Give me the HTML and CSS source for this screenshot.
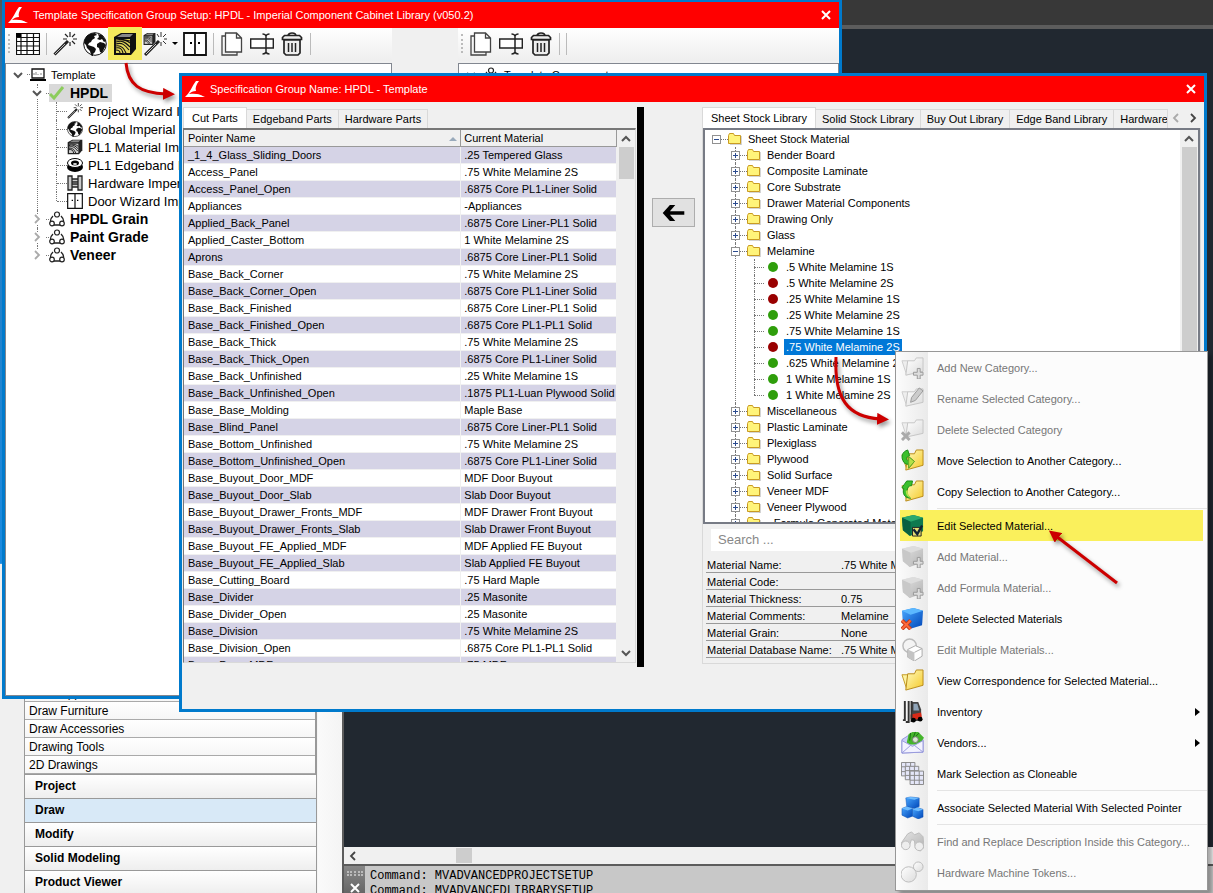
FILE: index.html
```html
<!DOCTYPE html>
<html lang="en">
<head>
  <meta charset="UTF-8" />
  <meta name="viewport" content="width=device-width, initial-scale=1.0"/>
  <title>Template Specification Group Setup</title>
  <link rel="stylesheet" href="styles.css">
</head>
<body>
  <svg class="defs" aria-hidden="true">
    <defs>
      <linearGradient id="gold" x1="0" y1="0" x2="1" y2="1"><stop offset="0" stop-color="#fffbc0"/><stop offset="1" stop-color="#f5c928"/></linearGradient>
      <linearGradient id="blue" x1="0" y1="0" x2="1" y2="1"><stop offset="0" stop-color="#4aa8ff"/><stop offset="1" stop-color="#0046b8"/></linearGradient>
      <linearGradient id="grey" x1="0" y1="0" x2="1" y2="1"><stop offset="0" stop-color="#e4e4e4"/><stop offset="1" stop-color="#b2b2b2"/></linearGradient>
      <linearGradient id="pale" x1="0" y1="0" x2="1" y2="1"><stop offset="0" stop-color="#fff"/><stop offset="1" stop-color="#dcdcdc"/></linearGradient>
      <marker id="head" markerWidth="4" markerHeight="4" refX="1" refY="2" orient="auto"><path d="M0 0L4 2L0 4z" fill="#c00"/></marker>
    </defs>
    <symbol id="logo" viewBox="0 0 20 16"><path d="M14 0c-3 4-4 7-3 10-3 0-5 1-7 3 6-1 11 0 16 3H0C5 12 7 5 11 0z" fill="#fff"/><path d="M3 14c5-2 11-1 15 1.500H1z" fill="#fff"/></symbol>
    <symbol id="close" viewBox="0 0 10 10"><path d="M1 1l8 8M9 1L1 9" fill="none" stroke="#fff" stroke-width="2"/></symbol>
    <symbol id="grid" viewBox="0 0 24 24"><path d="M.5 1.500h23v21H.5zM.5 5.500h23M.5 9.500h23M.5 14h23M.5 18.500h23M5 1.500v21M11 1.500v21M17.500 1.500v21" fill="#fff" stroke="#111" stroke-width="1.200"/><path d="M0 1h5v4H0z"/></symbol>
    <symbol id="wand" viewBox="0 0 24 24"><path d="M1.500 22.500L15 9" stroke="#222" stroke-width="3"/><path d="M2 22L12 12" stroke="#bbb" stroke-width="1"/><path d="M17 0v5M17 10v4M10 7h4M20 7h4M12 2l3 3M22 2l-3 3M19 9l3 3" stroke="#222" stroke-width="1.200"/></symbol>
    <symbol id="globe" viewBox="0 0 24 24"><circle cx="12" cy="12" r="11.300" fill="#fff" stroke="#111"/><path d="M3 5c2-3 6-4 9-4l2 2-3 1 1 2-3 2-1 2-2 1-1 2 3 1 3 1 2 2-1 3-2 2v3l-2-2-1-4-3-3-1-3-2-2c0-2 1-4 2-6zM15 2l4 1 4 6-2 1-2-3-2 1-3-1 2-2zM14 12l3-2 4 1 2 2-2 4-2 4-2-1-1-4-2-1z" fill="#111"/></symbol>
    <symbol id="cabinet" viewBox="0 0 24 24"><path d="M1 5L8 1h15v16l-5 6H1z" fill="#111"/><path d="M4 5l5-3h11l-3 3z" fill="#888"/><path d="M3 7h14v14H3z" fill="#e3d85c"/><path d="M3 10c6-2 9 0 14 5M3 12c6-2 9 1 13 6M3 14c5-1 8 2 10 7M3 16c4-1 6 1 7 5M3 18c2 0 4 1 4 3M3 8c6-1 10 0 14 3M8 7l9 2" fill="none" stroke="#111" stroke-width="1.100"/></symbol>
    <symbol id="cabinet-grey" viewBox="0 0 24 24"><path d="M1 5L8 1h15v16l-5 6H1z" fill="#222"/><path d="M4 5l5-3h11l-3 3z" fill="#888"/><path d="M3 7h14v14H3z" fill="#ccc"/><path d="M3 10c6-2 9 0 14 5M3 12c6-2 9 1 13 6M3 14c5-1 8 2 10 7M3 16c4-1 6 1 7 5M3 8c6-1 10 0 14 3" fill="none" stroke="#222" stroke-width="1.500"/></symbol>
    <symbol id="cabinet-wand" viewBox="0 0 24 24"><use href="#cabinet-grey" width="13" height="14"/><path d="M2 23L16 9" stroke="#222" stroke-width="3"/><path d="M3 22L13 12" stroke="#ccc"/><path d="M18 0v5M18 10v4M21 7h3M14 2l2 3M23 2l-3 3M20 9l3 3" stroke="#333"/></symbol>
    <symbol id="doors" viewBox="0 0 24 24"><path d="M1 1h22v22H1zM12 1v22" fill="#fff" stroke="#111" stroke-width="1.800"/><path d="M7 10h2v2H7zM15 10h2v2h-2z"/></symbol>
    <symbol id="copy" viewBox="0 0 22 24"><path d="M4 4H1v19h15v-3" fill="none" stroke="#444" stroke-width="1.300"/><path d="M4.500 1h11l5 5v14h-16zM15.500 1v5h5" fill="#fff" stroke="#444" stroke-width="1.300"/></symbol>
    <symbol id="rename" viewBox="0 0 24 24"><path d="M.7 7h22.600v9H.7z" fill="#fff" stroke="#222" stroke-width="1.400"/><path d="M16 4v16M12.500 2c2 0 3 .5 3.500 2 .5-1.500 1.500-2 3.500-2M12.500 22c2 0 3-.5 3.500-2 .5 1.500 1.500 2 3.500 2" fill="none" stroke="#222" stroke-width="1.500"/></symbol>
    <symbol id="trash" viewBox="0 0 22 24"><path d="M7 4c0-4 8-4 8 0M1.500 5.500l2-2h15l2 2v2h-19zM3 8h16v13l-2 2H5l-2-2z" fill="#eee" stroke="#222" stroke-width="1.700"/><path d="M7.500 11v9M11 11v9M14.500 11v9" stroke="#222" stroke-width="1.500"/></symbol>
    <symbol id="down" viewBox="0 0 10 10"><path d="M1 3l4 4 4-4" fill="none" stroke="#555" stroke-width="2"/></symbol>
    <symbol id="up" viewBox="0 0 10 10"><path d="M1 7l4-4 4 4" fill="none" stroke="#555" stroke-width="2"/></symbol>
    <symbol id="right" viewBox="0 0 10 10"><path d="M3 1l4 4-4 4" fill="none" stroke="currentColor" stroke-width="1.800"/></symbol>
    <symbol id="left" viewBox="0 0 10 10"><path d="M7 1L3 5l4 4" fill="none" stroke="currentColor" stroke-width="1.800"/></symbol>
    <symbol id="computer" viewBox="0 0 16 14"><path d="M2 1h12v9H2z" fill="#fff" stroke="#111" stroke-width="1.300"/><path d="M4 7V5M6 7V4M8 7V6M11 7V5" stroke="#888"/><path d="M0 11h16v2H0z"/></symbol>
    <symbol id="tick" viewBox="0 0 16 16"><path d="M1 9l4 4L14 2" fill="none" stroke="#8ccc5c" stroke-width="3"/></symbol>
    <symbol id="roll" viewBox="0 0 16 16"><ellipse cx="8" cy="10" rx="8" ry="5"/><ellipse cx="8" cy="6" rx="7.500" ry="4.500" fill="#fff" stroke="#000"/><ellipse cx="8" cy="6" rx="4" ry="2.500"/><ellipse cx="8" cy="7" rx="2" ry="1" fill="#ddd"/></symbol>
    <symbol id="hinge" viewBox="0 0 16 16"><path d="M1 1h4v14H1zM11 1h4v14h-4zM5 4h6v3H5zM5 9h6v3H5z" fill="#ccc" stroke="#222" stroke-width="1.300"/></symbol>
    <symbol id="group" viewBox="0 0 16 16"><path d="M4 5C1 8 1 11 3 13M12 5c3 3 3 6 1 8M5 14h6" fill="none" stroke="#222" stroke-width="1.300"/><g fill="#fff" stroke="#222" stroke-width="1.200"><circle cx="8" cy="3.500" r="2.500"/><circle cx="3" cy="12.500" r="2.300"/><circle cx="13" cy="12.500" r="2.300"/></g></symbol>
    <symbol id="folder" viewBox="0 0 14 12"><path d="M13 3v9H2" fill="none" stroke="#aaa"/><path d="M.5 10.500V2.500l1-2h4l1 2h6v8z" fill="#fff47a" stroke="#c99b22"/></symbol>
    <symbol id="m-folder" viewBox="0 0 24 24"><path d="M1 6h6l-1 15z" fill="#fdf3a0" stroke="#c39a22"/><path d="M5 22L7 5h7l2-4h7v16z" fill="url(#gold)" stroke="#b98a18"/></symbol>
    <symbol id="m-folder-off" viewBox="0 0 24 24"><path d="M1 5h6l-1 15z" fill="#eee" stroke="#ccc"/><path d="M5 20L7 5h7l2-3h7v14z" fill="url(#pale)" stroke="#c4c4c4"/></symbol>
    <symbol id="m-add-cat" viewBox="0 0 24 24"><use href="#m-folder-off"/><path d="M17 13h3v4h3v3h-3v4h-3v-4h-4v-3h4z" fill="#ddd" stroke="#999"/></symbol>
    <symbol id="m-rename-cat" viewBox="0 0 24 24"><use href="#m-folder-off"/><path d="M10 16l1-5 8-10 4 3-8 10z" fill="#ccc" stroke="#999"/></symbol>
    <symbol id="m-del-cat" viewBox="0 0 24 24"><use href="#m-folder-off"/><path d="M1 15l8 8M9 15l-8 8" stroke="#aaa" stroke-width="3"/></symbol>
    <symbol id="m-move" viewBox="0 0 24 24"><use href="#m-folder"/><path d="M7 1C1 3 0 8 2 12c1 3 3 4 6 4v4l6-7-6-5v4C5 12 5 8 9 7z" fill="#3cc02d" stroke="#198a19"/><path d="M8 8l6 5-6 7z" fill="#b5e04a" stroke="#6aa82a"/></symbol>
    <symbol id="m-copy" viewBox="0 0 24 24"><use href="#m-folder"/><path d="M1 8l5-7h6l-1 5h-2c-4 4-4 9 1 13C4 19 1 14 3 9z" fill="#3cc02d" stroke="#198a19"/><path d="M7 11c0 4 1 6 4 8-5-1-6-4-6-8z" fill="#b5e04a"/></symbol>
    <symbol id="m-edit" viewBox="0 0 24 24"><path d="M1 4l12-3 10 3v14l-14 5-7-6z" fill="#0f7a4f"/><path d="M1 4l12-3 10 3-13 4z" fill="#2aa86e"/><path d="M1 4l9 4v15l-8-6z" fill="#086040"/><path d="M12 14h9v9h-9z" fill="#e4dc72" stroke="#222"/><path d="M13 16l4 5 5-9" fill="none" stroke="#123" stroke-width="2.500"/></symbol>
    <symbol id="m-cube-off" viewBox="0 0 24 24"><path d="M1 4l12-3 10 3v14l-14 5-7-6z" fill="url(#grey)"/><path d="M1 4l12-3 10 3-13 4z" fill="#ddd"/><path d="M1 4l9 4v15l-8-6z" fill="#c8c8c8"/><path d="M17 13h3v4h3v3h-3v4h-3v-4h-4v-3h4z" fill="#ddd" stroke="#999"/></symbol>
    <symbol id="m-delete" viewBox="0 0 24 24"><path d="M1 4l12-3 10 3-1 15-13 4-7-6z" fill="url(#blue)"/><path d="M1 4l12-3 10 3-13 4z" fill="#5cb8ff"/><path d="M1 14l9 9M10 14l-9 9" stroke="#c33a1a" stroke-width="4"/><path d="M1 14l9 9M10 14l-9 9" stroke="#ff6a3c" stroke-width="2"/></symbol>
    <symbol id="m-multi" viewBox="0 0 24 24"><circle cx="9" cy="8" r="7" fill="#f4f4f4" stroke="#bbb" stroke-width="1.500"/><path d="M7 12l8-4 7 3v8l-8 5-7-4z" fill="#fff" stroke="#aaa"/><path d="M7 12l7 3v9l-7-4z" fill="#c4c4c4"/><path d="M14 15l8-4" stroke="#aaa"/></symbol>
    <symbol id="m-forklift" viewBox="0 0 24 24"><path d="M11 2h7l3 8v12h-9z" fill="#444"/><path d="M13 4h4l2 7h-6z" fill="#8fa4b8"/><path d="M10 15l11-2 1 7H10z" fill="#d82a18"/><path d="M4 1v20H2M8 1v22H5M11 1v22" fill="none" stroke="#333" stroke-width="2"/><circle cx="13" cy="21" r="2.500"/><circle cx="20" cy="20" r="2.500"/></symbol>
    <symbol id="m-vendor" viewBox="0 0 24 24"><path d="M1 9l11-7 11 7v13L1 23z" fill="#c9cdf8" stroke="#8d90d8"/><path d="M6 12L8 3l4-2h6l6 6-5 7H9z" fill="#45b52c"/><path d="M9 10l1-8M12 9l3-8M15 6l4-4" stroke="#176d12"/><circle cx="15" cy="9" r="3" fill="#d9e8d2" stroke="#777"/><path d="M1 10l11 6 11-6v12L1 23zM1 23l9-8M23 22l-9-7" fill="#f2f2ff" stroke="#9699db"/></symbol>
    <symbol id="m-clone" viewBox="0 0 24 24"><g fill="#e4e6f8" stroke="#888"><path d="M.5.500h14v14H.5zM.5 5h14M.5 10h14M5 .5v14M10 .5v14"/><path d="M4.500 4.500h14v14h-14zM4.500 9h14M4.500 14h14M9 4.500v14M14 4.500v14"/><path d="M9.500 9.500h14v14h-14zM9.500 14h14M9.500 19h14M14 9.500v14M19 9.500v14"/></g></symbol>
    <symbol id="m-associate" viewBox="0 0 24 24"><g fill="url(#blue)" stroke="#0a4fb0" stroke-width=".5"><path d="M5 2l5-1 9 1v9l-5 2-8-2z"/><path d="M1 13l5-2 6 2v8l-5 2-6-3z"/><path d="M12 14l5-2 6 2v8l-5 2-6-3z"/></g><path d="M5 2l5-1 9 1-5 2zM1 13l5-2 6 2-5 2zM12 14l5-2 6 2-5 2z" fill="#6dbcff"/></symbol>
    <symbol id="m-find" viewBox="0 0 24 24"><path d="M7 4l4-2 3 3 5-2 4 4 1 11-4 4-5-3-1-8-3-1-3 8-5 1-3-5z" fill="url(#grey)" stroke="#bbb"/><circle cx="5" cy="16" r="4.500" fill="#eee" stroke="#bbb"/><circle cx="19" cy="17" r="4.500" fill="#eee" stroke="#bbb"/></symbol>
    <symbol id="m-token" viewBox="0 0 24 24"><g fill="url(#pale)" stroke="#bbb"><circle cx="18" cy="6" r="5"/><circle cx="8" cy="14" r="8"/></g></symbol>
  </svg>

  <div class="desktop">
    <aside class="palette">
      <div class="palette-list">
        <button type="button">Draw Appliances</button>
        <button type="button">Draw Furniture</button>
        <button type="button">Draw Accessories</button>
        <button type="button">Drawing Tools</button>
        <button type="button">2D Drawings</button>
      </div>
      <div class="palette-groups">
        <button type="button">Project</button>
        <button type="button" class="current">Draw</button>
        <button type="button">Modify</button>
        <button type="button">Solid Modeling</button>
        <button type="button">Product Viewer</button>
      </div>
    </aside>
    <main class="drawing">
      <div class="ribbon"></div>
      <div class="canvas"></div>
      <div class="hscroll">
        <svg class="chev"><use href="#left"/></svg>
        <span class="hthumb"></span>
      </div>
      <div class="command">
        <div class="command-grip"><span class="dots"></span><svg class="chev"><use href="#close"/></svg></div>
        <pre>Command: MVADVANCEDPROJECTSETUP
Command: MVADVANCEDLIBRARYSETUP</pre>
      </div>
    </main>

    <section class="window setup">
      <header class="titlebar">
        <svg class="logo"><use href="#logo"/></svg>
        <h1>Template Specification Group Setup: HPDL - Imperial Component Cabinet Library (v050.2)</h1>
        <button type="button" class="close" aria-label="Close"><svg><use href="#close"/></svg></button>
      </header>
      <div class="setup-body">
        <div class="setup-pane">
          <div class="toolbar">
            <span class="grip"></span>
            <button type="button" aria-label="Grid"><svg><use href="#grid"/></svg></button>
            <span class="sep"></span>
            <button type="button" aria-label="Project wizard"><svg><use href="#wand"/></svg></button>
            <button type="button" aria-label="Global"><svg><use href="#globe"/></svg></button>
            <button type="button" class="marked" aria-label="Materials"><svg><use href="#cabinet"/></svg></button>
            <button type="button" aria-label="Material wizard"><svg><use href="#cabinet-wand"/></svg></button>
            <span class="caret"></span>
            <button type="button" aria-label="Doors"><svg><use href="#doors"/></svg></button>
            <span class="sep"></span>
            <button type="button" aria-label="Copy"><svg><use href="#copy"/></svg></button>
            <button type="button" aria-label="Rename"><svg><use href="#rename"/></svg></button>
            <button type="button" aria-label="Delete"><svg><use href="#trash"/></svg></button>
            <span class="sep"></span>
          </div>
          <ul class="groups">
            <li>
              <div class="node small"><svg class="chev"><use href="#down"/></svg><i></i><svg class="icon"><use href="#computer"/></svg><span>Template</span></div>
              <ul class="specs">
                <li>
                  <div class="node bold"><svg class="chev"><use href="#down"/></svg><i></i><span class="picked"><svg class="icon"><use href="#tick"/></svg>HPDL</span></div>
                  <ul class="parts">
                    <li><div class="node"><i></i><svg class="icon"><use href="#wand"/></svg><span>Project Wizard Imperial</span></div></li>
                    <li><div class="node"><i></i><svg class="icon"><use href="#globe"/></svg><span>Global Imperial</span></div></li>
                    <li><div class="node"><i></i><svg class="icon"><use href="#cabinet-grey"/></svg><span>PL1 Material Imperial</span></div></li>
                    <li><div class="node"><i></i><svg class="icon"><use href="#roll"/></svg><span>PL1 Edgeband Imperial</span></div></li>
                    <li><div class="node"><i></i><svg class="icon"><use href="#hinge"/></svg><span>Hardware Imperial</span></div></li>
                    <li><div class="node"><i></i><svg class="icon"><use href="#doors"/></svg><span>Door Wizard Imperial</span></div></li>
                  </ul>
                </li>
                <li><div class="node bold"><svg class="chev shut"><use href="#right"/></svg><i></i><svg class="icon"><use href="#group"/></svg><span>HPDL Grain</span></div></li>
                <li><div class="node bold"><svg class="chev shut"><use href="#right"/></svg><i></i><svg class="icon"><use href="#group"/></svg><span>Paint Grade</span></div></li>
                <li><div class="node bold"><svg class="chev shut"><use href="#right"/></svg><i></i><svg class="icon"><use href="#group"/></svg><span>Veneer</span></div></li>
              </ul>
            </li>
          </ul>
        </div>
        <div class="setup-pane">
          <div class="toolbar">
            <span class="grip"></span>
            <button type="button" aria-label="Copy"><svg><use href="#copy"/></svg></button>
            <button type="button" aria-label="Rename"><svg><use href="#rename"/></svg></button>
            <button type="button" aria-label="Delete"><svg><use href="#trash"/></svg></button>
            <span class="sep"></span>
            <span class="sep"></span>
          </div>
          <ul class="groups">
            <li><div class="node small"><svg class="chev"><use href="#down"/></svg><i></i><svg class="icon"><use href="#group"/></svg><span>Template Components</span></div></li>
          </ul>
        </div>
      </div>
    </section>

    <section class="window spec">
      <header class="titlebar">
        <svg class="logo"><use href="#logo"/></svg>
        <h2>Specification Group Name: HPDL - Template</h2>
        <button type="button" class="close" aria-label="Close"><svg><use href="#close"/></svg></button>
      </header>
      <div class="spec-body">
        <div class="pane">
          <div class="tabs" role="tablist">
            <button type="button" role="tab" class="active">Cut Parts</button>
            <button type="button" role="tab">Edgeband Parts</button>
            <button type="button" role="tab">Hardware Parts</button>
          </div>
          <div class="list">
            <div class="list-view">
              <table class="pointers">
                <thead>
                  <tr><th>Pointer Name<span class="sort"></span></th><th>Current Material</th></tr>
                </thead>
                <tbody>
                  <tr><td>_1_4_Glass_Sliding_Doors</td><td>.25 Tempered Glass</td></tr>
                  <tr><td>Access_Panel</td><td>.75 White Melamine 2S</td></tr>
                  <tr><td>Access_Panel_Open</td><td>.6875 Core PL1-Liner Solid</td></tr>
                  <tr><td>Appliances</td><td>-Appliances</td></tr>
                  <tr><td>Applied_Back_Panel</td><td>.6875 Core Liner-PL1 Solid</td></tr>
                  <tr><td>Applied_Caster_Bottom</td><td>1 White Melamine 2S</td></tr>
                  <tr><td>Aprons</td><td>.6875 Core Liner-PL1 Solid</td></tr>
                  <tr><td>Base_Back_Corner</td><td>.75 White Melamine 2S</td></tr>
                  <tr><td>Base_Back_Corner_Open</td><td>.6875 Core PL1-Liner Solid</td></tr>
                  <tr><td>Base_Back_Finished</td><td>.6875 Core Liner-PL1 Solid</td></tr>
                  <tr><td>Base_Back_Finished_Open</td><td>.6875 Core PL1-PL1 Solid</td></tr>
                  <tr><td>Base_Back_Thick</td><td>.75 White Melamine 2S</td></tr>
                  <tr><td>Base_Back_Thick_Open</td><td>.6875 Core PL1-Liner Solid</td></tr>
                  <tr><td>Base_Back_Unfinished</td><td>.25 White Melamine 1S</td></tr>
                  <tr><td>Base_Back_Unfinished_Open</td><td>.1875 PL1-Luan Plywood Solid</td></tr>
                  <tr><td>Base_Base_Molding</td><td>Maple Base</td></tr>
                  <tr><td>Base_Blind_Panel</td><td>.6875 Core Liner-PL1 Solid</td></tr>
                  <tr><td>Base_Bottom_Unfinished</td><td>.75 White Melamine 2S</td></tr>
                  <tr><td>Base_Bottom_Unfinished_Open</td><td>.6875 Core PL1-Liner Solid</td></tr>
                  <tr><td>Base_Buyout_Door_MDF</td><td>MDF Door Buyout</td></tr>
                  <tr><td>Base_Buyout_Door_Slab</td><td>Slab Door Buyout</td></tr>
                  <tr><td>Base_Buyout_Drawer_Fronts_MDF</td><td>MDF Drawer Front Buyout</td></tr>
                  <tr><td>Base_Buyout_Drawer_Fronts_Slab</td><td>Slab Drawer Front Buyout</td></tr>
                  <tr><td>Base_Buyout_FE_Applied_MDF</td><td>MDF Applied FE Buyout</td></tr>
                  <tr><td>Base_Buyout_FE_Applied_Slab</td><td>Slab Applied FE Buyout</td></tr>
                  <tr><td>Base_Cutting_Board</td><td>.75 Hard Maple</td></tr>
                  <tr><td>Base_Divider</td><td>.25 Masonite</td></tr>
                  <tr><td>Base_Divider_Open</td><td>.25 Masonite</td></tr>
                  <tr><td>Base_Division</td><td>.75 White Melamine 2S</td></tr>
                  <tr><td>Base_Division_Open</td><td>.6875 Core PL1-PL1 Solid</td></tr>
                  <tr><td>Base_Door_MDF</td><td>.75 MDF</td></tr>
                </tbody>
              </table>
            </div>
            <div class="vscroll">
              <svg class="chev"><use href="#up"/></svg>
              <span class="vthumb"></span>
              <svg class="chev"><use href="#down"/></svg>
            </div>
          </div>
        </div>
        <div class="sash"></div>
        <div class="transfer">
          <button type="button" aria-label="Assign material">
            <svg viewBox="0 0 24 20"><path d="M14 1H8L0 10l8 9h6l-6-7h16V8H8z"/></svg>
          </button>
        </div>
        <div class="pane">
          <div class="tabs library-tabs" role="tablist">
            <button type="button" role="tab" class="active">Sheet Stock Library</button>
            <button type="button" role="tab">Solid Stock Library</button>
            <button type="button" role="tab">Buy Out Library</button>
            <button type="button" role="tab">Edge Band Library</button>
            <button type="button" role="tab" class="cut">Hardware Library</button>
            <span class="tab-nav"><svg class="chev shut"><use href="#left"/></svg><svg class="chev"><use href="#right"/></svg></span>
          </div>
          <div class="library">
            <div class="library-tree">
              <div class="tree-view">
                <ul class="root">
                  <li>
                    <div class="row"><button type="button" class="toggle open" aria-label="Collapse"></button><i></i><svg class="folder"><use href="#folder"/></svg><span>Sheet Stock Material</span></div>
                    <ul class="categories">
                      <li><div class="row"><button type="button" class="toggle" aria-label="Expand"></button><i></i><svg class="folder"><use href="#folder"/></svg><span>Bender Board</span></div></li>
                      <li><div class="row"><button type="button" class="toggle" aria-label="Expand"></button><i></i><svg class="folder"><use href="#folder"/></svg><span>Composite Laminate</span></div></li>
                      <li><div class="row"><button type="button" class="toggle" aria-label="Expand"></button><i></i><svg class="folder"><use href="#folder"/></svg><span>Core Substrate</span></div></li>
                      <li><div class="row"><button type="button" class="toggle" aria-label="Expand"></button><i></i><svg class="folder"><use href="#folder"/></svg><span>Drawer Material Components</span></div></li>
                      <li><div class="row"><button type="button" class="toggle" aria-label="Expand"></button><i></i><svg class="folder"><use href="#folder"/></svg><span>Drawing Only</span></div></li>
                      <li><div class="row"><button type="button" class="toggle" aria-label="Expand"></button><i></i><svg class="folder"><use href="#folder"/></svg><span>Glass</span></div></li>
                      <li>
                        <div class="row"><button type="button" class="toggle open" aria-label="Collapse"></button><i></i><svg class="folder"><use href="#folder"/></svg><span>Melamine</span></div>
                        <ul class="materials">
                          <li><div class="row"><i></i><b class="dot"></b><span>.5 White Melamine 1S</span></div></li>
                          <li><div class="row"><i></i><b class="dot red"></b><span>.5 White Melamine 2S</span></div></li>
                          <li><div class="row"><i></i><b class="dot red"></b><span>.25 White Melamine 1S</span></div></li>
                          <li><div class="row"><i></i><b class="dot"></b><span>.25 White Melamine 2S</span></div></li>
                          <li><div class="row"><i></i><b class="dot"></b><span>.75 White Melamine 1S</span></div></li>
                          <li><div class="row"><i></i><b class="dot red"></b><span class="selected">.75 White Melamine 2S</span></div></li>
                          <li><div class="row"><i></i><b class="dot"></b><span>.625 White Melamine 2S</span></div></li>
                          <li><div class="row"><i></i><b class="dot"></b><span>1 White Melamine 1S</span></div></li>
                          <li><div class="row"><i></i><b class="dot"></b><span>1 White Melamine 2S</span></div></li>
                        </ul>
                      </li>
                      <li><div class="row"><button type="button" class="toggle" aria-label="Expand"></button><i></i><svg class="folder"><use href="#folder"/></svg><span>Miscellaneous</span></div></li>
                      <li><div class="row"><button type="button" class="toggle" aria-label="Expand"></button><i></i><svg class="folder"><use href="#folder"/></svg><span>Plastic Laminate</span></div></li>
                      <li><div class="row"><button type="button" class="toggle" aria-label="Expand"></button><i></i><svg class="folder"><use href="#folder"/></svg><span>Plexiglass</span></div></li>
                      <li><div class="row"><button type="button" class="toggle" aria-label="Expand"></button><i></i><svg class="folder"><use href="#folder"/></svg><span>Plywood</span></div></li>
                      <li><div class="row"><button type="button" class="toggle" aria-label="Expand"></button><i></i><svg class="folder"><use href="#folder"/></svg><span>Solid Surface</span></div></li>
                      <li><div class="row"><button type="button" class="toggle" aria-label="Expand"></button><i></i><svg class="folder"><use href="#folder"/></svg><span>Veneer MDF</span></div></li>
                      <li><div class="row"><button type="button" class="toggle" aria-label="Expand"></button><i></i><svg class="folder"><use href="#folder"/></svg><span>Veneer Plywood</span></div></li>
                      <li><div class="row"><button type="button" class="toggle" aria-label="Expand"></button><i></i><svg class="folder"><use href="#folder"/></svg><span>- Formula Generated Materials</span></div></li>
                    </ul>
                  </li>
                </ul>
              </div>
              <div class="vscroll">
                <svg class="chev"><use href="#up"/></svg>
                <span class="vthumb long"></span>
                <svg class="chev"><use href="#down"/></svg>
              </div>
            </div>
            <input type="text" class="search" aria-label="Search materials" placeholder="Search ..." />
            <table class="details">
              <tr><th scope="row">Material Name:</th><td>.75 White Melamine 2S</td></tr>
              <tr><th scope="row">Material Code:</th><td></td></tr>
              <tr><th scope="row">Material Thickness:</th><td>0.75</td></tr>
              <tr><th scope="row">Material Comments:</th><td>Melamine</td></tr>
              <tr><th scope="row">Material Grain:</th><td>None</td></tr>
              <tr><th scope="row">Material Database Name:</th><td>.75 White Melamine 2S</td></tr>
            </table>
          </div>
        </div>
      </div>
    </section>

    <div class="menu" role="menu">
      <button type="button" role="menuitem" disabled><svg><use href="#m-add-cat"/></svg>Add New Category...</button>
      <button type="button" role="menuitem" disabled><svg><use href="#m-rename-cat"/></svg>Rename Selected Category...</button>
      <button type="button" role="menuitem" disabled><svg><use href="#m-del-cat"/></svg>Delete Selected Category</button>
      <button type="button" role="menuitem"><svg><use href="#m-move"/></svg>Move Selection to Another Category...</button>
      <button type="button" role="menuitem"><svg><use href="#m-copy"/></svg>Copy Selection to Another Category...</button>
      <hr>
      <button type="button" role="menuitem" class="marked"><svg><use href="#m-edit"/></svg>Edit Selected Material...</button>
      <button type="button" role="menuitem" disabled><svg><use href="#m-cube-off"/></svg>Add Material...</button>
      <button type="button" role="menuitem" disabled><svg><use href="#m-cube-off"/></svg>Add Formula Material...</button>
      <button type="button" role="menuitem"><svg><use href="#m-delete"/></svg>Delete Selected Materials</button>
      <button type="button" role="menuitem" disabled><svg><use href="#m-multi"/></svg>Edit Multiple Materials...</button>
      <button type="button" role="menuitem"><svg><use href="#m-folder"/></svg>View Correspondence for Selected Material...</button>
      <button type="button" role="menuitem" class="submenu"><svg><use href="#m-forklift"/></svg>Inventory</button>
      <button type="button" role="menuitem" class="submenu"><svg><use href="#m-vendor"/></svg>Vendors...</button>
      <button type="button" role="menuitem"><svg><use href="#m-clone"/></svg>Mark Selection as Cloneable</button>
      <hr>
      <button type="button" role="menuitem"><svg><use href="#m-associate"/></svg>Associate Selected Material With Selected Pointer</button>
      <hr>
      <button type="button" role="menuitem" disabled><svg><use href="#m-find"/></svg>Find and Replace Description Inside this Category...</button>
      <button type="button" role="menuitem" disabled><svg><use href="#m-token"/></svg>Hardware Machine Tokens...</button>
    </div>

    <!-- red callout arrows -->
    <svg class="callout to-window" viewBox="0 0 64 48"><path d="M7 3c2 22 14 30 40 31" marker-end="url(#head)"/></svg>
    <svg class="callout to-menu" viewBox="0 0 64 76"><path d="M6 2c-2 42 12 60 44 62" marker-end="url(#head)"/></svg>
    <svg class="callout to-item" viewBox="0 0 80 66"><path d="M73 58L12 11" marker-end="url(#head)"/></svg>
  </div>
</body>
</html>
```
FILE: styles.css
```css
* {
  box-sizing: border-box;
}

body {
  margin: 0;
  font-family: "Liberation Sans", Arial, sans-serif;
  font-size: 11px;
  color: #000;
}

button {
  font: inherit;
  color: inherit;
  padding: 0;
  border: none;
  background: none;
  text-align: left;
}

ul {
  list-style: none;
  margin: 0;
  padding: 0;
}

.defs {
  position: absolute;
  width: 0;
  height: 0;
}

.desktop {
  position: relative;
  display: flex;
  height: 100vh;
  overflow: hidden;
  background: #f0f0f0;
}

.chev {
  width: 10px;
  height: 10px;
  flex: none;
  color: #444;
}

.chev.shut {
  color: #aaa;
}

/* tool palette on the left */
.palette {
  flex: 0 0 342px;
  display: flex;
  flex-direction: column;
  justify-content: flex-end;
  margin-bottom: -2px;
  padding: 0 25px 0 24px;
  background: linear-gradient(#555, #2a7ab8 15%, #1a8ae0) 0 0 / 2px 63% no-repeat,
    linear-gradient(90deg, #f0f0f0 317px, #fafafa 318px, #f4f4f4);
}

.palette-list {
  border: 1px solid #999;
  border-bottom: none;
  border-right-width: 2px;
}

.palette-list button {
  display: block;
  width: 100%;
  height: 18px;
  padding: 2px 4px 0;
  border-bottom: 1px solid #aaa;
  background: linear-gradient(#fff, #f6f6f6);
  font-size: 12px;
  line-height: 15px;
}

.palette-groups {
  border: 1px solid #999;
  border-bottom: none;
}

.palette-groups button {
  display: block;
  width: 100%;
  height: 24px;
  padding: 0 10px 2px;
  border-bottom: 1px solid #999;
  background: linear-gradient(#fff, #eee);
  font-size: 12px;
  font-weight: bold;
}

.palette-groups .current {
  background: #d8e9f7;
}

.drawing {
  flex: 1;
  display: flex;
  flex-direction: column;
  border-left: 2px solid #5c5c5c;
}

.ribbon {
  height: 29px;
  background: #383838;
  border-bottom: 4px solid #5c5c5c;
}

.canvas {
  flex: 1;
  background: #212830;
}

.hscroll {
  display: flex;
  align-items: center;
  height: 17px;
  padding-left: 4px;
  background: #f0f0f0;
}

.hthumb {
  width: 16px;
  height: 15px;
  margin-left: 98px;
  background: #cdcdcd;
}

.command {
  display: flex;
  height: 29px;
  border-top: 2px solid #5c5c5c;
  background: #c8c8c8;
  overflow: hidden;
}

.command-grip {
  display: flex;
  flex-direction: column;
  align-items: center;
  gap: 7px;
  width: 21px;
  padding-top: 5px;
  background: linear-gradient(#888, #666);
}

.dots {
  width: 16px;
  height: 5px;
  border-top: 2px dotted #bbb;
  border-bottom: 2px dotted #bbb;
}

.command pre {
  margin: 3px 0 0 5px;
  font: 12px/15px "Liberation Mono", monospace;
}

/* windows */
.window {
  position: absolute;
  display: flex;
  flex-direction: column;
  border: 3px solid #007acc;
  background: #f0f0f0;
}

.setup {
  inset: 0 371px 194px 2px;
  border-top-width: 2px;
}

.spec {
  inset: 73px 6px 181px 179px;
}

.titlebar {
  flex: none;
  display: flex;
  align-items: center;
  height: 26px;
  padding: 0 8px 0 3px;
  background: #f00;
  color: #fff;
}

.titlebar h1,
.titlebar h2 {
  flex: 1;
  margin: 0;
  font-size: 11px;
  font-weight: normal;
}

.logo {
  width: 20px;
  height: 16px;
  margin-right: 5px;
}

.close,
.close svg {
  display: block;
  width: 10px;
  height: 10px;
}

.setup-body {
  flex: 1;
  display: grid;
  grid-template-columns: minmax(0, 387fr) minmax(0, 381fr);
  column-gap: 66px;
  min-height: 0;
}

.setup-pane {
  display: flex;
  flex-direction: column;
  min-height: 0;
}

.toolbar {
  display: flex;
  align-items: center;
  gap: 6px;
  height: 33px;
  margin-bottom: 2px;
  padding: 0 3px 2px;
  background: linear-gradient(#fff, #eee);
}

.toolbar button svg {
  display: block;
  width: 24px;
  height: 24px;
}

.toolbar .marked {
  margin: 0 -5px;
  padding: 5px 5px 4px;
  background: #f5ea5c;
}

.grip {
  height: 19px;
  border-left: 2px dotted #bbb;
}

.sep {
  width: 1px;
  height: 22px;
  background: #bbb;
}

.caret {
  margin: 0 -1px;
  border: 3px solid transparent;
  border-top-color: #000;
  border-bottom: none;
}

.groups {
  flex: 1;
  padding-top: 1px;
  border: 1px solid #828790;
  background: #fff;
  overflow: hidden;
}

.groups > li {
  padding-left: 7px;
}

.node {
  display: flex;
  align-items: center;
  height: 18px;
  font-size: 13px;
  white-space: nowrap;
}

.node.small {
  height: 19px;
  font-size: 11px;
}

.node.bold {
  font-size: 14px;
  font-weight: bold;
}

.node i {
  width: 3px;
  margin-left: 4px;
  border-top: 1px dotted #777;
}

.node .icon {
  width: 16px;
  height: 16px;
  margin-right: 5px;
}

.picked {
  display: flex;
  align-items: center;
  height: 18px;
  padding-right: 4px;
  background: #d9d9d9;
}

.specs li,
.categories li,
.materials li {
  position: relative;
}

.specs li::before,
.categories li::before,
.materials li::before {
  content: "";
  position: absolute;
  top: 0;
  bottom: 0;
  left: 0;
  border-left: 1px dotted #777;
}

.specs li:last-child::before {
  bottom: auto;
  height: 9px;
}

.specs {
  margin-left: 24px;
}

.specs > li > .node .chev {
  position: relative;
  margin-left: -5px;
  background: #fff;
}

.parts {
  margin-left: 19px;
}

.parts .node i {
  width: 10px;
  margin-left: 1px;
}

/* specification window */
.spec-body {
  flex: 1;
  display: grid;
  grid-template-columns: minmax(0, 454fr) 7px 58px minmax(0, 499fr);
  min-height: 0;
  padding: 5px 3px 42px 1px;
}

.pane {
  display: flex;
  flex-direction: column;
  min-width: 0;
  min-height: 0;
}

.tabs {
  display: flex;
  align-items: flex-end;
  height: 21px;
}

.tabs button {
  height: 19px;
  padding: 0 6px;
  border: 1px solid #d9d9d9;
  border-left: none;
  border-bottom: none;
  white-space: nowrap;
}

.tabs .active {
  height: 21px;
  padding: 0 8px;
  border-left: 1px solid #d9d9d9;
  background: #fff;
}

.library-tabs .cut {
  flex: 1;
  min-width: 0;
  overflow: hidden;
}

.tab-nav {
  display: flex;
  gap: 7px;
  padding: 0 3px 5px;
}

.list {
  flex: 1;
  display: flex;
  min-height: 0;
  margin: 0 1px 4px 0;
  border: 1px solid #d9d9d9;
  border-top: 2px solid #777;
  border-left-color: #777;
}

.list-view {
  flex: 1;
  overflow: hidden;
  background: #fff;
}

.pointers {
  width: 100%;
  border-collapse: collapse;
  table-layout: fixed;
}

.pointers th {
  height: 16px;
  padding: 0 3px;
  border-right: 1px solid #999;
  border-bottom: 1px solid #999;
  background: #f0f0f0;
  font-weight: normal;
  text-align: left;
}

.pointers th:first-child {
  width: 64%;
  padding-left: 4px;
}

.sort {
  float: right;
  margin-top: 5px;
  border: 4px solid transparent;
  border-top: none;
  border-bottom-color: #9ab;
}

.pointers td {
  height: 17px;
  padding: 0 3px;
  border-right: 1px solid #f0f0f0;
  border-bottom: 1px solid #f0f0f0;
  white-space: nowrap;
}

.pointers td:first-child {
  padding-left: 4px;
}

.pointers tr:nth-child(odd) td {
  background: #d5d3e6;
}

.vscroll {
  flex: none;
  display: flex;
  flex-direction: column;
  align-items: center;
  width: 18px;
  padding: 4px 1px;
  background: #f0f0f0;
}

.vthumb {
  width: 15px;
  height: 32px;
  margin: 3px 0 auto;
  background: #cdcdcd;
}

.vthumb.long {
  height: 75%;
}

.sash {
  background: #000;
}

.transfer {
  padding: 91px 7px 0 8px;
}

.transfer button {
  display: flex;
  align-items: center;
  justify-content: center;
  width: 100%;
  height: 29px;
  border: 1px solid #adadad;
  background: #e1e1e1;
}

.transfer svg {
  width: 23px;
  height: 18px;
}

.library {
  flex: 1;
  display: flex;
  flex-direction: column;
  min-height: 0;
  margin-bottom: 3px;
  border: 1px solid #d9d9d9;
  border-top: none;
}

.library-tree {
  flex: 1;
  display: flex;
  min-height: 0;
  border: 2px solid #777b85;
  background: #fff;
}

.tree-view {
  flex: 1;
  overflow: hidden;
  padding: 1px 0 0 7px;
}

.row {
  display: flex;
  align-items: center;
  height: 16px;
  white-space: nowrap;
}

.row i {
  width: 7px;
  border-top: 1px dotted #777;
}

.row span {
  height: 16px;
  padding: 0 2px;
  line-height: 16px;
}

.row .selected {
  background: #0078d7;
  color: #fff;
}

.folder {
  width: 14px;
  height: 12px;
  margin-right: 4px;
}

.toggle {
  position: relative;
  width: 9px;
  height: 9px;
  border: 1px solid #919191;
  background: linear-gradient(#2b4b8f, #2b4b8f) center / 5px 1px no-repeat,
    linear-gradient(#2b4b8f, #2b4b8f) center / 1px 5px no-repeat, #fff;
}

.toggle.open {
  background: linear-gradient(#2b4b8f, #2b4b8f) center / 5px 1px no-repeat, #fff;
}

.categories {
  margin-left: 23px;
}

.categories > li > .row {
  margin-left: -4px;
}

.materials {
  margin-left: 19px;
}

.materials li:last-child::before {
  bottom: 8px;
}

.materials i {
  width: 10px;
}

.dot {
  width: 10px;
  height: 10px;
  margin: 0 6px 0 4px;
  border-radius: 50%;
  background: #2f9e0b;
}

.dot.red {
  background: #990000;
}

.search {
  height: 22px;
  margin: 5px 8px;
  padding: 0 7px;
  border: none;
  outline: none;
  background: #fff;
  font-family: inherit;
  font-size: 13px;
}

.search::placeholder {
  color: #888;
}

.details {
  margin: 0 3px 5px;
  border-collapse: collapse;
}

.details th,
.details td {
  height: 17px;
  padding: 3px 1px 0;
  border-bottom: 1px solid #999;
  font-weight: normal;
  line-height: 13px;
  text-align: left;
}

.details th {
  width: 134px;
}

/* context menu */
.menu {
  position: absolute;
  top: 351px;
  left: 895px;
  padding: 0 0 2px 1px;
  border: 1px solid #979797;
  background: linear-gradient(90deg, #fcfcfc, #eaeaea 32px, #fcfcfc 32px);
  box-shadow: 4px 4px 4px rgba(0, 0, 0, 0.3);
}

.menu button {
  display: flex;
  align-items: center;
  width: 100%;
  height: 31px;
  padding: 0 17px 0 4px;
  white-space: nowrap;
}

.menu button:disabled {
  color: #777;
}

.menu svg {
  flex: none;
  width: 23px;
  height: 23px;
  margin-right: 13px;
}

.menu hr {
  height: 1px;
  margin: 1px 0 1px 40px;
  border: none;
  background: #e4e4e4;
}

.menu .marked {
  border-right: 4px solid #fcfcfc;
  background: linear-gradient(90deg, transparent 3px, #faf05c 3px);
}

.menu .submenu {
  padding-right: 7px;
}

.submenu::after {
  content: "";
  margin-left: auto;
  border: 4px solid transparent;
  border-left: 5px solid #000;
  border-right: none;
}

.callout {
  position: absolute;
  fill: none;
  stroke: #c00;
  stroke-width: 3px;
  filter: drop-shadow(2px 3px 2px rgba(0, 0, 0, 0.4));
}

.to-window {
  top: 60px;
  left: 119px;
  width: 64px;
  height: 48px;
}

.to-menu {
  top: 355px;
  left: 830px;
  width: 64px;
  height: 76px;
}

.to-item {
  top: 525px;
  left: 1044px;
  width: 80px;
  height: 66px;
}
```
